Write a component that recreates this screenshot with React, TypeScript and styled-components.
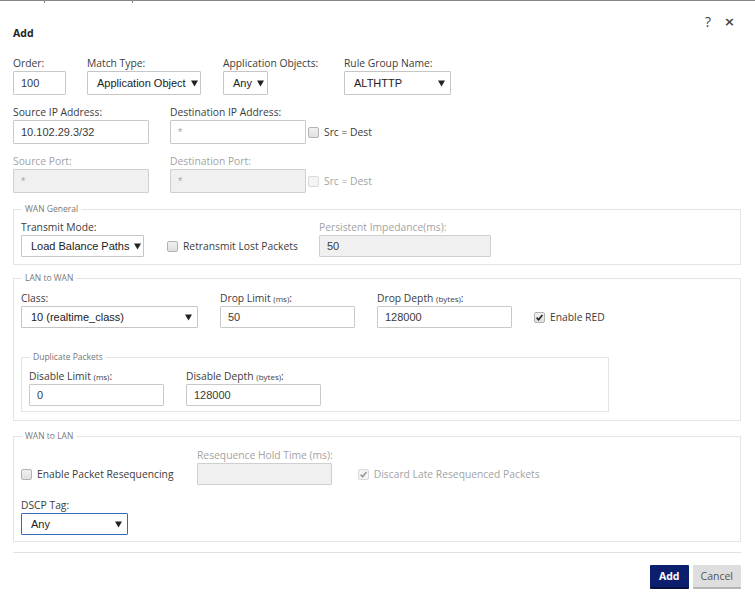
import React from "react";
import styled, { createGlobalStyle } from "styled-components";

const GlobalStyle = createGlobalStyle`
  html, body { margin: 0; padding: 0; background: #ffffff; }
  body { font-family: "Open Sans", Lato, sans-serif; color: #3a3a3a; }
  * { box-sizing: border-box; }
`;

const Page = styled.div`
  width: 755px;
  height: 604px;
  overflow: hidden;
  background: #ffffff;
`;

const TopRule = styled.div`
  display: flex;
  height: 2px;
  border-top: 1px solid #868686;
`;

const TopSeg = styled.div<{ $w: number }>`
  width: ${(p) => p.$w}px;
  height: 2px;
  border-right: 1px solid #868686;
`;

const Dialog = styled.div`
  padding: 0 14px 0 13px;
`;

const Header = styled.div`
  display: flex;
  justify-content: space-between;
  align-items: flex-start;
  padding-top: 12px;
`;

const Title = styled.div`
  margin-top: 12px;
  font-size: 10.5px;
  line-height: 14px;
  font-weight: 700;
  color: #222;
`;

const HeaderIcons = styled.div`
  display: flex;
  align-items: center;
  gap: 13px;
  margin-right: 6px;
  height: 16px;
  color: #444;
`;

const HelpIcon = styled.span`
  font-family: "Open Sans", sans-serif;
  font-size: 14px;
  line-height: 16px;
`;

const CloseIcon = styled.span`
  font-family: "DejaVu Sans", sans-serif;
  font-size: 13px;
  font-weight: 700;
  line-height: 16px;
`;

const Row = styled.div<{ $gap: number; $mt: number }>`
  display: flex;
  align-items: flex-end;
  gap: ${(p) => p.$gap}px;
  margin-top: ${(p) => p.$mt}px;
`;

const Field = styled.div<{ $w?: number }>`
  display: flex;
  flex-direction: column;
  ${(p) => (p.$w ? `width: ${p.$w}px;` : "")}
`;

const Label = styled.div<{ $disabled?: boolean }>`
  font-size: 10.3px;
  line-height: 15px;
  height: 15px;
  white-space: nowrap;
  color: ${(p) => (p.$disabled ? "#a3a3a3" : "#3c3c3c")};
`;

const Unit = styled.span`
  font-size: 8px;
`;

const TextInput = styled.input<{ $w: number; $h: number }>`
  width: ${(p) => p.$w}px;
  height: ${(p) => p.$h}px;
  margin: 0;
  padding: 0 7px;
  border: 1px solid #c9c9c9;
  border-radius: 1px;
  background: #ffffff;
  font-family: "Liberation Sans", Arial, sans-serif;
  font-size: 11px;
  color: #3a3a3a;
  outline: none;
  &::placeholder {
    color: #a8a8a8;
  }
  &:disabled {
    background: #f0f0f0;
    border-color: #cfcfcf;
  }
`;

const Select = styled.div<{ $w: number; $h: number; $spread?: boolean; $focus?: boolean }>`
  display: flex;
  align-items: center;
  justify-content: ${(p) => (p.$spread ? "space-between" : "flex-start")};
  gap: 5px;
  width: ${(p) => p.$w}px;
  height: ${(p) => p.$h}px;
  padding: 0 5px 0 9px;
  border: 1px solid ${(p) => (p.$focus ? "#2f6db5" : "#c6c6c6")};
  border-radius: 1px;
  background: #ffffff;
  font-family: "Liberation Sans", Arial, sans-serif;
  font-size: 11px;
  color: #222;
  white-space: nowrap;
  overflow: hidden;
`;

const ArrowSvg = styled.svg`
  flex: none;
`;

const Arrow = () => (
  <ArrowSvg width="7" height="7" viewBox="0 0 7 7">
    <polygon points="0,0.5 7,0.5 3.5,6.5" fill="#222" />
  </ArrowSvg>
);

const InlineLine = styled.div`
  display: flex;
  align-items: center;
  gap: 2px;
`;

const CheckGroup = styled.label<{ $w?: number; $h: number; $disabled?: boolean }>`
  display: flex;
  align-items: center;
  gap: 5px;
  height: ${(p) => p.$h}px;
  ${(p) => (p.$w ? `width: ${p.$w}px;` : "")}
  font-size: 10.3px;
  white-space: nowrap;
  color: ${(p) => (p.$disabled ? "#a3a3a3" : "#3c3c3c")};
`;

const Box = styled.span<{ $disabled?: boolean }>`
  display: inline-flex;
  align-items: center;
  justify-content: center;
  width: 11px;
  height: 11px;
  flex: none;
  border: 1px solid ${(p) => (p.$disabled ? "#d9d9d9" : "#b2b2b2")};
  border-radius: 2px;
  background: ${(p) => (p.$disabled ? "#f4f4f4" : "linear-gradient(#f0f0f0, #e0e0e0)")};
`;

const Checkbox = ({ checked, disabled }: { checked?: boolean; disabled?: boolean }) => (
  <Box $disabled={disabled}>
    {checked && (
      <svg width="9" height="9" viewBox="0 0 9 9">
        <path
          d="M1.6 4.6 L3.6 6.7 L7.4 2"
          fill="none"
          stroke={disabled ? "#9a9a9a" : "#222"}
          strokeWidth="1.6"
        />
      </svg>
    )}
  </Box>
);

const Fieldset = styled.fieldset<{ $mt: number; $pt: number; $pb: number; $w?: number }>`
  margin: ${(p) => p.$mt}px 0 0 0;
  padding: ${(p) => p.$pt}px 7px ${(p) => p.$pb}px 7px;
  border: 1px solid #e4e4e4;
  min-width: 0;
  ${(p) => (p.$w ? `width: ${p.$w}px;` : "")}
`;

const Legend = styled.legend`
  padding: 0 3px;
  margin-left: 1px;
  font-size: 8.5px;
  line-height: 12px;
  color: #777;
`;

const Separator = styled.div`
  margin-top: 10px;
  border-top: 1px solid #e2e2e2;
`;

const Footer = styled.div`
  display: flex;
  justify-content: flex-end;
  gap: 4px;
  margin-top: 12px;
`;

const Button = styled.button<{ $primary?: boolean }>`
  height: 24px;
  padding: 0 ${(p) => (p.$primary ? 9 : 8)}px;
  border: none;
  border-bottom: 2px solid ${(p) => (p.$primary ? "#06123f" : "#b4b4b4")};
  border-radius: 1px;
  background: ${(p) => (p.$primary ? "#0b1f6e" : "#dedede")};
  color: ${(p) => (p.$primary ? "#ffffff" : "#555")};
  font-family: "Open Sans", Lato, sans-serif;
  font-size: 10.5px;
  font-weight: ${(p) => (p.$primary ? 700 : 400)};
`;

export default function App() {
  return (
    <Page>
      <GlobalStyle />
      <TopRule>
        <TopSeg $w={45} />
        <TopSeg $w={88} />
      </TopRule>
      <Dialog>
        <Header>
          <Title>Add</Title>
          <HeaderIcons>
            <HelpIcon>?</HelpIcon>
            <CloseIcon>×</CloseIcon>
          </HeaderIcons>
        </Header>

        <Row $gap={22} $mt={16}>
          <Field $w={52}>
            <Label>Order:</Label>
            <TextInput $w={53} $h={24} defaultValue="100" />
          </Field>
          <Field $w={114}>
            <Label>Match Type:</Label>
            <Select $w={114} $h={24}>
              Application Object <Arrow />
            </Select>
          </Field>
          <Field $w={99}>
            <Label>Application Objects:</Label>
            <Select $w={45} $h={24}>
              Any <Arrow />
            </Select>
          </Field>
          <Field $w={107}>
            <Label>Rule Group Name:</Label>
            <Select $w={107} $h={24} $spread>
              ALTHTTP <Arrow />
            </Select>
          </Field>
        </Row>

        <Row $gap={21} $mt={10}>
          <Field>
            <Label>Source IP Address:</Label>
            <TextInput $w={136} $h={24} defaultValue="10.102.29.3/32" />
          </Field>
          <Field>
            <Label>Destination IP Address:</Label>
            <InlineLine>
              <TextInput $w={136} $h={24} placeholder="*" />
              <CheckGroup $h={24}>
                <Checkbox />
                Src = Dest
              </CheckGroup>
            </InlineLine>
          </Field>
        </Row>

        <Row $gap={21} $mt={10}>
          <Field>
            <Label $disabled>Source Port:</Label>
            <TextInput $w={136} $h={24} placeholder="*" disabled />
          </Field>
          <Field>
            <Label $disabled>Destination Port:</Label>
            <InlineLine>
              <TextInput $w={136} $h={24} placeholder="*" disabled />
              <CheckGroup $h={24} $disabled>
                <Checkbox disabled />
                Src = Dest
              </CheckGroup>
            </InlineLine>
          </Field>
        </Row>

        <Fieldset $mt={10} $pt={5} $pb={7}>
          <Legend>WAN General</Legend>
          <Row $gap={23} $mt={0}>
            <Field>
              <Label>Transmit Mode:</Label>
              <Select $w={123} $h={22}>
                Load Balance Paths <Arrow />
              </Select>
            </Field>
            <CheckGroup $w={129} $h={22}>
              <Checkbox />
              Retransmit Lost Packets
            </CheckGroup>
            <Field>
              <Label $disabled>Persistent Impedance(ms):</Label>
              <TextInput $w={172} $h={22} defaultValue="50" disabled />
            </Field>
          </Row>
        </Fieldset>

        <Fieldset $mt={7} $pt={7} $pb={8}>
          <Legend>LAN to WAN</Legend>
          <Row $gap={22} $mt={0}>
            <Field>
              <Label>Class:</Label>
              <Select $w={177} $h={22} $spread>
                10 (realtime_class) <Arrow />
              </Select>
            </Field>
            <Field>
              <Label>
                Drop Limit <Unit>(ms)</Unit>:
              </Label>
              <TextInput $w={135} $h={22} defaultValue="50" />
            </Field>
            <Field>
              <Label>
                Drop Depth <Unit>(bytes)</Unit>:
              </Label>
              <TextInput $w={135} $h={22} defaultValue="128000" />
            </Field>
            <CheckGroup $h={22}>
              <Checkbox checked />
              Enable RED
            </CheckGroup>
          </Row>

          <Fieldset $mt={23} $pt={6} $pb={5} $w={588}>
            <Legend>Duplicate Packets</Legend>
            <Row $gap={22} $mt={0}>
              <Field>
                <Label>
                  Disable Limit <Unit>(ms)</Unit>:
                </Label>
                <TextInput $w={135} $h={22} defaultValue="0" />
              </Field>
              <Field>
                <Label>
                  Disable Depth <Unit>(bytes)</Unit>:
                </Label>
                <TextInput $w={135} $h={22} defaultValue="128000" />
              </Field>
            </Row>
          </Fieldset>
        </Fieldset>

        <Fieldset $mt={9} $pt={6} $pb={6}>
          <Legend>WAN to LAN</Legend>
          <Row $gap={25} $mt={0}>
            <CheckGroup $w={151} $h={22}>
              <Checkbox />
              Enable Packet Resequencing
            </CheckGroup>
            <Field>
              <Label $disabled>Resequence Hold Time (ms):</Label>
              <TextInput $w={135} $h={22} disabled />
            </Field>
            <CheckGroup $h={22} $disabled>
              <Checkbox checked disabled />
              Discard Late Resequenced Packets
            </CheckGroup>
          </Row>
          <Row $gap={0} $mt={13}>
            <Field>
              <Label>DSCP Tag:</Label>
              <Select $w={107} $h={22} $spread $focus>
                Any <Arrow />
              </Select>
            </Field>
          </Row>
        </Fieldset>

        <Separator />
        <Footer>
          <Button $primary>Add</Button>
          <Button>Cancel</Button>
        </Footer>
      </Dialog>
    </Page>
  );
}
